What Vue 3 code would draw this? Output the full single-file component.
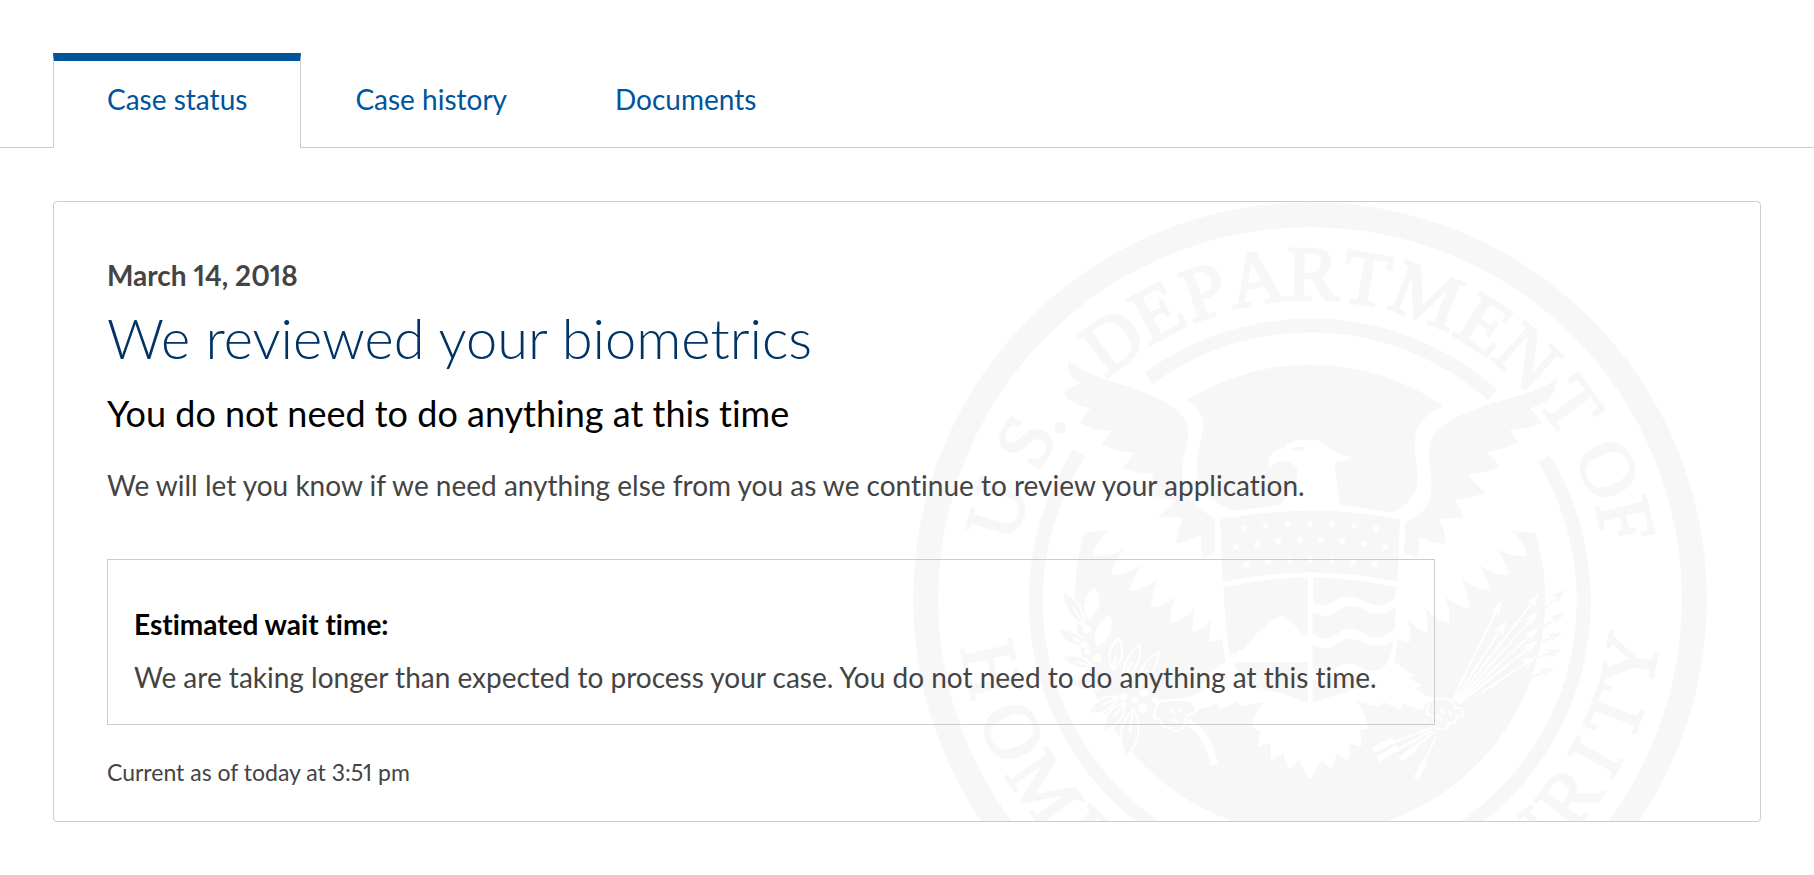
<template>
  <div class="case-page">
    <div class="tab-bar" role="tablist" aria-label="Case details">
      <button
        v-for="tab in tabs"
        :key="tab"
        type="button"
        role="tab"
        class="tab"
        :class="{ active: tab === activeTab }"
        :aria-selected="tab === activeTab"
        @click="activeTab = tab"
      >
        {{ tab }}
      </button>
    </div>

    <main class="status-card">
      <svg class="seal" viewBox="-1191 -1191 2382 2382" aria-hidden="true">
        <!-- Rings -->
        <circle class="line" r="1153" stroke-width="75" />
        <path class="line" stroke-width="42" d="M-692 -439A822 822 0 1 0 702 -421" />
        <path class="line" stroke-width="42" d="M-484 -662A822 822 0 0 1 548 -612" />

        <!-- Lettering -->
        <text
          v-for="(item, i) in topLetters"
          :key="'t' + i"
          class="letter"
          y="-898"
          :transform="`rotate(${item[1]})`"
        >{{ item[0] }}</text>
        <text
          v-for="(item, i) in bottomLetters"
          :key="'b' + i"
          class="letter"
          y="1055"
          :transform="`rotate(${item[1]})`"
        >{{ item[0] }}</text>

        <!-- Sky and head -->
        <path class="grey" d="M-370 -597A702 702 0 0 1 400 -579C335 -550 312 -510 314 -460C318 -400 330 -360 316 -325C300 -290 270 -265 240 -259L95 -282L-90 -282L-220 -265C-270 -275 -320 -310 -336 -365C-352 -430 -318 -480 -320 -530C-325 -565 -345 -580 -370 -597Z" />
        <path class="white" d="M-92 -280C-55 -315 -35 -350 -38 -390C-50 -418 -100 -420 -122 -392C-132 -425 -110 -452 -75 -452C-72 -472 -30 -482 15 -478C55 -468 65 -430 125 -429C110 -415 95 -411 73 -409L92 -270Z" />
        <path class="grey" d="M-60 -452Q-35 -460 -5 -455Q-30 -441 -45 -443Z" />

        <!-- Wings -->
        <path class="grey" d="M-725 -717C-670 -667 -580 -652 -490 -617C-400 -582 -360 -537 -365 -487C-375 -437 -392 -397 -380 -347C-365 -297 -330 -267 -285 -242L-285 -137L-322 -124Q-330 -150 -325 -192Q-360 -175 -402 -165Q-400 -205 -380 -242Q-410 -250 -458 -244Q-425 -270 -400 -297Q-460 -300 -505 -327Q-480 -345 -467 -377Q-520 -375 -567 -392Q-545 -410 -527 -439Q-580 -440 -625 -465Q-605 -485 -595 -505Q-650 -505 -690 -529Q-670 -550 -660 -572Q-715 -580 -738 -617Q-715 -640 -690 -647Q-730 -665 -725 -717Z" />
        <path class="grey" d="M740 -662C690 -617 570 -602 490 -567C410 -537 358 -497 357 -447C355 -387 375 -347 358 -297C345 -257 310 -242 286 -230L282 -137L322 -124Q330 -150 328 -185Q360 -170 408 -165Q405 -210 385 -242Q410 -240 460 -245Q450 -275 433 -297Q480 -300 526 -320Q500 -340 475 -375Q520 -378 570 -395Q555 -420 530 -440Q590 -450 627 -470Q610 -490 598 -507Q660 -510 695 -530Q680 -550 660 -572Q740 -590 740 -662Z" />

        <!-- Lower field, mirrored -->
        <path class="grey" :d="fieldPath" />
        <path class="grey" :d="fieldPath" transform="scale(-1 1)" />

        <!-- Shield -->
        <path class="grey" d="M-270 -239Q0 -290 270 -239L262 -52Q0 -107 -262 -52Z" />
        <polygon
          v-for="(star, i) in stars"
          :key="'s' + i"
          class="white"
          points="0,-13 4,-4 13,-4 6,3 8,12 0,6 -8,12 -6,3 -13,-4 -4,-4"
          :transform="`translate(${star[0]} ${star[1]})`"
        />
        <path class="grey" d="M-260 -35Q-130 -63 -7 -65V113L-30 98L-55 68L-72 60L-88 46L-104 60L-120 66L-135 85L-150 92L-175 123L-200 153L-212 151L-225 165L-232 160L-240 178Q-255 70 -260 -35Z" />
        <path class="grey" d="M-228 190H-7V313Q-90 275 -190 262Q-215 240 -228 190Z" />
        <path class="grey" d="M10 -65Q130 -63 260 -35L256 -5C225 30 190 20 160 5C130 -12 90 -10 70 8Q40 28 10 12Z" />
        <path class="grey" d="M8 38Q45 62 80 38Q120 5 165 34Q205 62 258 23L254 90Q205 132 165 106Q120 75 80 105Q45 130 8 105Z" />
        <path class="grey" d="M8 136Q45 160 80 136Q120 105 165 133Q205 155 250 123Q245 180 222 205Q190 225 150 205Q120 185 80 205Q45 235 8 206Z" />
        <path class="grey" d="M8 238Q45 262 80 238Q120 212 160 240L208 252Q190 262 150 268Q80 285 8 313Z" />

        <!-- Olive branch -->
        <path v-for="(d, i) in greyLeaves" :key="'g' + i" class="leaf" :d="d" />
        <path v-for="(d, i) in whiteLeaves" :key="'w' + i" class="white" :d="d" />
        <circle
          v-for="(berry, i) in berries"
          :key="'o' + i"
          class="white"
          :cx="berry[0]"
          :cy="berry[1]"
          :r="berry[2]"
        />
        <path class="cut" stroke-width="22" d="M-368 368C-320 395 -300 440 -286 498" />

        <!-- Arrows -->
        <g v-for="(a, i) in arrows" :key="'a' + i" :class="a.tone">
          <path class="shaft" :d="a.shaft" />
          <path :d="a.head" />
        </g>
        <path class="cut" stroke-width="6" d="M370 383L190 455M365 395L205 485M370 400L272 480M378 415L318 540" />
        <path class="cut" stroke-width="17" d="M250 422L190 454M262 445L205 482M318 445L272 482M345 488L318 538" />

        <!-- Talons -->
        <path class="leaf" d="M-440 305Q-400 300 -355 306L-340 335L-372 352L-376 378Q-395 408 -425 385Q-448 388 -450 362Q-478 360 -462 332Q-462 308 -440 305Z" />
        <path class="leaf" d="M355 306Q400 290 430 310Q438 325 430 330Q465 320 460 345Q450 360 440 352Q440 380 415 372Q410 405 375 385L372 352L350 345Z" />
        <path class="cut" stroke-width="7" d="M-420 330L-405 348M-395 328L-390 340M-415 362L-398 366M390 330L405 345M380 350L395 365M415 335L425 350" />
      </svg>

      <p class="date">March 14, 2018</p>
      <h1>We reviewed your biometrics</h1>
      <h2>You do not need to do anything at this time</h2>
      <p class="body-text">
        We will let you know if we need anything else from you as we continue to review your application.
      </p>

      <section class="wait-box">
        <h3>Estimated wait time:</h3>
        <p class="body-text">
          We are taking longer than expected to process your case. You do not need to do anything at this time.
        </p>
      </section>

      <p class="updated">Current as of today at 3:51 pm</p>
    </main>
  </div>
</template>

<script setup>
import { ref } from 'vue'

const tabs = ['Case status', 'Case history', 'Documents']
const activeTab = ref('Case status')

// Each letter with its angle on the ring, in degrees
const topLetters = [
  ['U', -74], ['S', -61], ['.', -55.5],
  ['D', -37.5], ['E', -28], ['P', -19], ['A', -9.5], ['R', 0.5],
  ['T', 10], ['M', 21], ['E', 32.5], ['N', 42], ['T', 53.5],
  ['O', 66.5], ['F', 76]
]
const bottomLetters = [
  ['H', 77.5], ['O', 66], ['M', 54.5], ['E', 43],
  ['U', -42], ['R', -52.5], ['I', -61], ['T', -69.5], ['Y', -79]
]

const fieldPath = 'M-677 -199Q-640 -200 -600 -207Q-640 -177 -652 -132Q-610 -122 -555 -152Q-590 -117 -595 -72Q-550 -72 -505 -102Q-535 -62 -540 -24Q-500 -27 -455 -62Q-475 -17 -477 26Q-440 23 -405 -7Q-422 33 -417 73Q-370 63 -345 23Q-355 63 -352 101Q-320 93 -293 58Q-305 93 -300 129Q-280 128 -265 118L-252 185Q-285 215 -315 230L-300 237Q-325 255 -335 258L-318 267Q-340 290 -365 295Q-400 300 -470 303L-350 306L-340 333Q-300 325 -280 313L-270 333L-220 308L-210 323L-140 308Q-165 340 -175 388L-150 393L-155 443L-120 433L-115 485L-80 461L-65 513L-35 483L-3 538L1 538V705A705 705 0 0 1 -677 -199Z'

const stars = [
  [-200, -212], [-133, -219], [-67, -226], [0, -227], [67, -225], [132, -219], [198, -211],
  [-222, -157], [-159, -165], [-95, -174], [-30, -177], [33, -177], [97, -173], [161, -166], [225, -157],
  [-190, -103], [-126, -111], [-61, -117], [2, -119], [67, -117], [130, -110], [195, -103]
]

// Pointed leaf between a tip and a base, bulging w to each side
const leaf = ([tx, ty, bx, by, w]) => {
  const len = Math.hypot(bx - tx, by - ty)
  const nx = (-(by - ty) / len) * w
  const ny = ((bx - tx) / len) * w
  const mx = (tx + bx) / 2
  const my = (ty + by) / 2
  return `M${tx} ${ty}Q${mx + nx} ${my + ny} ${bx} ${by}Q${mx - nx} ${my - ny} ${tx} ${ty}ZM${bx} ${by}L${mx} ${my}`
}

const greyLeaves = [
  [-743, -27, -675, 83, 38],
  [-760, 91, -665, 143, 34],
  [-747, 173, -650, 203, 34],
  [-725, 255, -610, 255, 36],
  [-665, 343, -575, 293, 38],
  [-620, 398, -555, 310, 40],
  [-552, 473, -530, 330, 52],
  [-575, 118, -590, 213, 38],
  [-510, 138, -560, 243, 34],
  [-455, 161, -520, 263, 32]
].map(leaf)

const whiteLeaves = [
  [-645, -37, -665, 63, 44],
  [-600, 48, -640, 143, 44]
].map(leaf)

const berries = [
  [-670, 91, 12], [-638, 178, 12], [-668, 158, 8], [-560, 293, 12],
  [-525, 303, 9], [-498, 283, 12], [-502, 328, 14], [-465, 303, 9]
]

const arrow = (tone, x1, y1, x2, y2) => {
  const len = Math.hypot(x2 - x1, y2 - y1)
  const ux = (x2 - x1) / len
  const uy = (y2 - y1) / len
  const bx = x2 - ux * 46
  const by = y2 - uy * 46
  return {
    tone,
    shaft: `M${x1} ${y1}L${bx + ux * 12} ${by + uy * 12}`,
    head: `M${x2} ${y2}L${bx - uy * 15} ${by + ux * 15}L${bx + ux * 12} ${by + uy * 12}L${bx + uy * 15} ${by - ux * 15}Z`
  }
}

const arrows = [
  arrow('white', 430, 300, 574, 5),
  arrow('white', 435, 302, 590, 65),
  arrow('white', 440, 305, 688, -17),
  arrow('white', 442, 308, 685, 38),
  arrow('white', 445, 311, 685, 85),
  arrow('white', 448, 314, 683, 125),
  arrow('white', 515, 280, 680, 172),
  arrow('grey', 700, 33, 766, -30),
  arrow('grey', 700, 85, 766, 38),
  arrow('grey', 695, 130, 758, 98),
  arrow('grey', 685, 175, 755, 151),
  arrow('grey', 665, 235, 735, 207)
]
</script>

<style>
body {
  margin: 0;
  background: #fff;
}
</style>

<style scoped>
.case-page {
  padding: 53px 0 24px;
  font-family: Lato, "Liberation Sans", sans-serif;
  font-size: 28px;
  font-variant-ligatures: none;
  font-variant-numeric: proportional-nums;
  line-height: 32px;
  color: #444;
}

.tab-bar {
  display: flex;
  padding: 0 53px;
  border-bottom: 1px solid #ccc;
}

.tab {
  margin: 0 0 -1px;
  padding: 22px 53px 33px;
  border: 1px solid transparent;
  border-top: 8px solid transparent;
  border-bottom: 0;
  background: none;
  font: inherit;
  color: #00549b;
  cursor: pointer;
}

.tab.active {
  border-color: #00549b #ccc;
  background: #fff;
}

.status-card {
  position: relative;
  z-index: 0;
  overflow: hidden;
  margin: 53px 53px 0;
  padding: 57px 53px 33px;
  border: 1px solid #ccc;
  border-radius: 4px;
}

.date,
h1,
h2,
h3,
.body-text,
.updated {
  margin: 0;
}

.date {
  font-weight: 700;
}

h1 {
  margin-top: 15px;
  font-size: 56px;
  font-weight: 300;
  line-height: 64px;
  color: #036;
}

h2 {
  margin-top: 21px;
  font-size: 36px;
  font-weight: 400;
  line-height: 44px;
  color: #000;
}

h2 + .body-text {
  margin-top: 34px;
}

.wait-box {
  box-sizing: border-box;
  width: 83%;
  margin: 58px 0 31px;
  padding: 48px 26px 31px;
  border: 1px solid #ccc;
}

h3 {
  margin-bottom: 21px;
  font-size: 28px;
  font-weight: 700;
  line-height: 32px;
  color: #000;
}

.updated {
  font-size: 23px;
}

.seal {
  position: absolute;
  z-index: -1;
  top: 0;
  right: 53px;
  width: 794px;
  height: 794px;
}

.grey {
  fill: #f7f7f7;
  stroke: #f7f7f7;
  stroke-width: 0;
}

.white {
  fill: #fff;
  stroke: #fff;
  stroke-width: 0;
}

.line {
  fill: none;
  stroke: #f7f7f7;
}

.cut {
  fill: none;
  stroke: #fff;
}

.leaf {
  fill: #f7f7f7;
  stroke: #fff;
  stroke-width: 6px;
}

.shaft {
  stroke-width: 6px;
}

.letter {
  fill: #f7f7f7;
  stroke: #f7f7f7;
  stroke-width: 8px;
  font-family: "Liberation Serif", serif;
  font-size: 232px;
  text-anchor: middle;
}
</style>
